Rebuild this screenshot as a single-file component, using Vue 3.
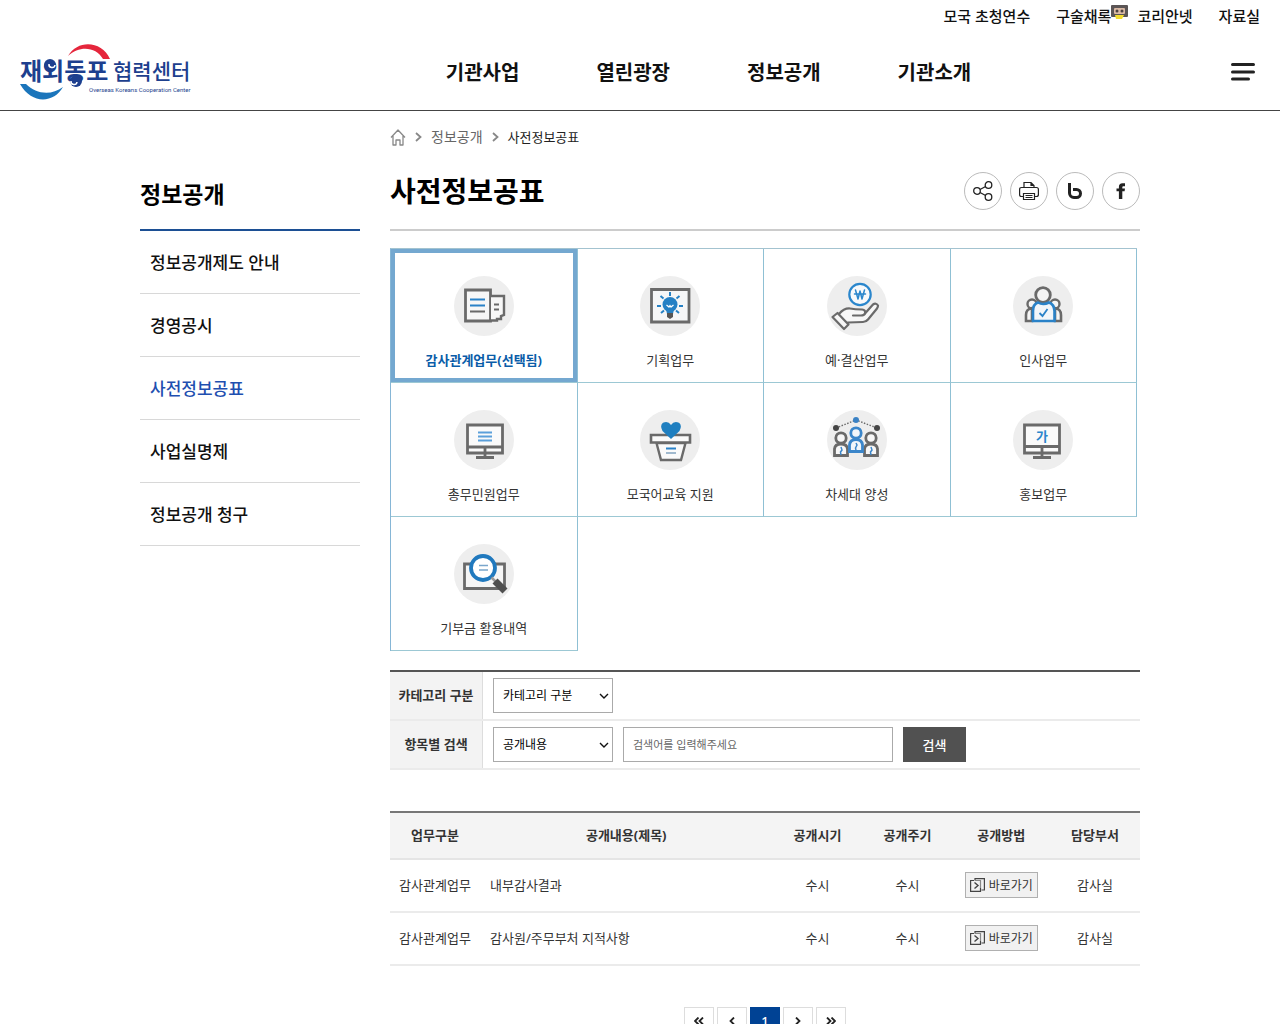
<script setup>
import { ref } from 'vue';

const topLinks = [
  { name: '모국 초청연수' },
  { name: '구술채록', cassette: true },
  { name: '코리안넷' },
  { name: '자료실' },
];

const mainMenu = ['기관사업', '열린광장', '정보공개', '기관소개'];

const sideMenu = ['정보공개제도 안내', '경영공시', '사전정보공표', '사업실명제', '정보공개 청구'];
const currentPage = '사전정보공표';

const categories = [
  { name: '감사관계업무', icon: 'docs' },
  { name: '기획업무', icon: 'idea' },
  { name: '예·결산업무', icon: 'budget' },
  { name: '인사업무', icon: 'people' },
  { name: '총무민원업무', icon: 'monitor' },
  { name: '모국어교육 지원', icon: 'donate' },
  { name: '차세대 양성', icon: 'network' },
  { name: '홍보업무', icon: 'promo' },
  { name: '기부금 활용내역', icon: 'search' },
];
const selected = ref('감사관계업무');

const category = ref('');
const field = ref('content');
const keyword = ref('');

const rows = [
  { work: '감사관계업무', title: '내부감사결과', time: '수시', cycle: '수시', dept: '감사실' },
  { work: '감사관계업무', title: '감사원/주무부처 지적사항', time: '수시', cycle: '수시', dept: '감사실' },
];
</script>

<template>
  <header class="header">
    <ul class="top-links">
      <li v-for="link in topLinks" :key="link.name">
        <a href="#">{{ link.name }}</a>
        <svg v-if="link.cassette" class="cassette" width="17" height="14" viewBox="0 0 17 14" aria-hidden="true">
          <rect x="0" y="0" width="17" height="12" rx="1" fill="#5b5555" />
          <rect x="3" y="3" width="11" height="6" rx="1" fill="#d9b9a4" />
          <circle cx="6" cy="6" r="1.5" fill="#4a4040" />
          <circle cx="11" cy="6" r="1.5" fill="#4a4040" />
          <path d="M5 14L4 10H13L11 14Z" fill="#f3dc2e" />
        </svg>
      </li>
    </ul>
    <div class="header-main">
      <a class="logo" href="#" aria-label="재외동포협력센터">
        <svg width="170" height="58" viewBox="0 0 170 58">
          <path d="M48 13C58 -4 82 -2 90 16L83 16C76 4 60 2 48 13Z" fill="#e5263c" />
          <path d="M0 41C12 62 34 60 43 44C31 53 16 51 6 41Z" fill="#1b75bb" />
          <text class="logo-strong" x="0" y="37">재외동포</text>
          <text class="logo-name" x="93" y="36">협력센터</text>
          <circle cx="30" cy="22" r="6" fill="#1d3f8e" />
          <circle cx="56" cy="38" r="6" fill="#1d3f8e" />
          <path d="M29 21A3 3 0 0 0 35 22M57 39A3 3 0 0 1 51 38" fill="none" stroke="#fff" stroke-width="1.5" />
          <text class="logo-en" x="69" y="49">Overseas Koreans Cooperation Center</text>
        </svg>
      </a>
      <nav class="main-nav">
        <a v-for="item in mainMenu" :key="item" href="#">{{ item }}</a>
      </nav>
      <button class="menu-btn" type="button" aria-label="전체메뉴">
        <svg width="24" height="18" viewBox="0 0 24 18">
          <path d="M1.5 1.5H22.5M1.5 9H22.5M1.5 16H17.5" stroke="#222" stroke-width="3" stroke-linecap="round" />
        </svg>
      </button>
    </div>
  </header>

  <div class="container">
    <aside class="side">
      <h2>정보공개</h2>
      <ul>
        <li v-for="item in sideMenu" :key="item">
          <a href="#" :class="{ on: item === currentPage }">{{ item }}</a>
        </li>
      </ul>
    </aside>

    <main class="content">
      <div class="breadcrumb">
        <a href="#" class="home" aria-label="홈">
          <svg width="16" height="17" viewBox="0 0 16 17">
            <path d="M1 8.5L8 1L15 8.5M3 7V16H6V11H10V16H13V7" fill="none" stroke="#888" stroke-width="1.3" stroke-linejoin="round" />
          </svg>
        </a>
        <svg width="7" height="10" viewBox="0 0 7 10"><path d="M1 1L5.5 5L1 9" fill="none" stroke="#888" stroke-width="1.8" /></svg>
        <a href="#">정보공개</a>
        <svg width="7" height="10" viewBox="0 0 7 10"><path d="M1 1L5.5 5L1 9" fill="none" stroke="#888" stroke-width="1.8" /></svg>
        <span>사전정보공표</span>
      </div>

      <div class="title-row">
        <h1>사전정보공표</h1>
        <div class="share">
          <button type="button" aria-label="공유">
            <svg width="20" height="20" viewBox="0 0 20 20" fill="none" stroke="#222" stroke-width="1.3">
              <circle cx="4" cy="10" r="3.3" />
              <circle cx="15.5" cy="4" r="3.3" />
              <circle cx="15.5" cy="16" r="3.3" />
              <path d="M7 8.5L12.6 5.5M7 11.5L12.6 14.5" />
            </svg>
          </button>
          <button type="button" aria-label="인쇄">
            <svg width="20" height="20" viewBox="0 0 20 20" fill="none" stroke="#222" stroke-width="1.2">
              <path d="M5 6.5V1.5H12L15 4.5V6.5M12 1.5V4.5H15" />
              <path d="M4 15.5H2.5Q0.6 15.5 0.6 13.5V8.5Q0.6 6.5 2.5 6.5H17.5Q19.4 6.5 19.4 8.5V13.5Q19.4 15.5 17.5 15.5H16" />
              <path d="M4.5 12.5H15.5V18.5H4.5ZM6.5 14.5H13.5M6.5 16.5H13.5" />
            </svg>
          </button>
          <button type="button" aria-label="밴드">
            <svg width="16" height="18" viewBox="0 0 16 18" fill="none" stroke="#222" stroke-width="3">
              <path d="M2.5 1V11A4.5 4.5 0 0 0 7 15.5H9.5A4 4 0 0 0 9.5 7.5H6" />
            </svg>
          </button>
          <button type="button" aria-label="페이스북">
            <svg width="10" height="16" viewBox="0 0 10 16">
              <path d="M9 0.3V3.2H7.3Q6.3 3.2 6.3 4.2V5.5H9L8.6 8.3H6.3V16H2.9V8.3H0.5V5.5H2.9V4Q2.9 0.3 6.5 0.3Z" fill="#222" />
            </svg>
          </button>
        </div>
      </div>

      <ul class="category-grid">
        <li v-for="item in categories" :key="item.name">
          <a href="#" :class="{ on: item.name === selected }" @click.prevent="selected = item.name">
            <svg width="60" height="60" viewBox="0 0 60 60" fill="none" stroke="#6a6a6a" stroke-width="2.8" aria-hidden="true">
              <circle cx="30" cy="30" r="30" fill="#eee" stroke="none" />
              <g v-if="item.icon === 'docs'">
                <path d="M11.5 14H36.5V45H11.5Z" fill="#f7f7f7" />
                <path d="M37 20H50V39L47 40V43H43V44.5H37" fill="#f7f7f7" stroke-width="2.4" />
                <path d="M16 23.5H31M16 29.5H31" stroke="#2a82c8" stroke-width="2" />
                <path d="M16 35.5H31M40 28.5H45M40 33.5H45" stroke-width="2" />
              </g>
              <g v-else-if="item.icon === 'idea'">
                <path d="M11.5 13.5H49V46H11.5Z" fill="#f5f6f7" />
                <circle cx="30" cy="28.5" r="7.5" fill="#2580c4" stroke="none" />
                <path d="M26 33H34L33 38H27Z" fill="#2580c4" stroke="none" />
                <path d="M27 37H33V41L30 43L27 41Z" fill="#555" stroke="none" />
                <path d="M26.5 29L29 31L30 29.5L31 31L33.5 29" stroke="#fff" stroke-width="1.2" />
                <path d="M30 16V20M20.5 20L23.5 22.5M39.5 20L36.5 22.5M17 30H21M39 30H43M21 37L24 34.5M39 37L36 34.5" stroke="#2580c4" stroke-width="2" />
              </g>
              <g v-else-if="item.icon === 'budget'" stroke-width="2.2" stroke-linejoin="round" stroke-linecap="round">
                <circle cx="33" cy="18.5" r="10.7" fill="#f7f9fb" stroke="#2a86cc" />
                <path d="M28.5 14L31 23L33 15L35 23L37.5 14M27.5 18H38.5" stroke="#2a86cc" stroke-width="1.5" />
                <path d="M12 38Q17 32 23 32.5Q28 33.5 35 33.5Q39 34 38 37.5L46 28.5Q49 26.5 51 29.5Q51 31 50 32.5L41 43.5Q39 46 36 46L21 46.5" fill="#f7f7f7" />
                <path d="M38 37.5Q37 39.5 34 39.5H26" />
                <path d="M5.5 41L10.5 37L21.5 48.5L17 53Z" fill="#f7f7f7" />
              </g>
              <g v-else-if="item.icon === 'people'">
                <circle cx="19" cy="28" r="4.5" fill="#f5f5f5" stroke-width="2.4" />
                <circle cx="42" cy="28" r="4.5" fill="#f5f5f5" stroke-width="2.4" />
                <path d="M13 45V39Q13 33 19 32V45ZM48 45V39Q48 33 42 32V45Z" fill="#f5f5f5" stroke-width="2.6" />
                <circle cx="30" cy="19" r="7.3" fill="#f5f5f5" />
                <path d="M20 45V35Q20 28 25 26.5Q30 29.5 36 26.5Q41 28 41.5 35V45Z" fill="#f2f6fa" stroke="#2a82c8" stroke-width="2.6" />
                <path d="M26.5 37L29.5 40L34.5 33" stroke="#2a82c8" stroke-width="1.8" />
              </g>
              <g v-else-if="item.icon === 'monitor'">
                <path d="M13.5 15H48.5V43H13.5Z" fill="#fafafa" />
                <path d="M13 37H49M31 37V47M22 47.5H40" />
                <path d="M24 22.5H38M24 26.5H38M24 30.5H38" stroke="#5a9fda" stroke-width="1.8" />
              </g>
              <g v-else-if="item.icon === 'donate'">
                <path d="M16.5 33H45.5L41 50H21Z" fill="#fafafa" stroke-width="2.4" />
                <path d="M11 25H50V32.5H11Z" fill="#fafafa" stroke-width="2.6" />
                <path d="M31 29L22.5 21Q19.5 15.5 23 12.8Q28 10.5 31 15Q34 10.5 39 12.8Q42.5 15.5 39.5 21Z" fill="#1f7fc0" stroke="none" />
                <path d="M26 38.5H36" stroke="#2a82c8" stroke-width="2" />
                <path d="M26 43H36" stroke="#8aa9c4" stroke-width="1.6" />
              </g>
              <g v-else-if="item.icon === 'network'">
                <path d="M9 18L29 10L50 18" stroke-width="1.4" stroke-dasharray="1.5 1.5" />
                <circle cx="9" cy="18" r="3" fill="#444" stroke="none" />
                <circle cx="50" cy="18" r="3" fill="#444" stroke="none" />
                <circle cx="29" cy="10" r="3" fill="#3b82c4" stroke="none" />
                <circle cx="14" cy="28" r="5.2" fill="#f7f7f7" />
                <circle cx="44" cy="28" r="5.2" fill="#f7f7f7" />
                <path d="M7.5 45.5V39Q8 34 14 34Q20 34 20.5 39V45.5ZM37.5 45.5V39Q38 34 44 34Q50 34 50.5 39V45.5Z" fill="#f7f7f7" />
                <path d="M22.5 41.5V35Q23 29.5 29 29.5Q35 29.5 35.5 35V41.5Z" fill="#f2f6fa" stroke="#3b86ca" />
                <circle cx="29" cy="23" r="5.2" fill="#f2f6fa" stroke="#3b86ca" />
                <path d="M14 37L15 40L13.5 42L14 45M29 33L30 35L28.5 38L29 40M44 37L45 40L43.5 42L44 45" stroke="#3b86ca" stroke-width="1.5" />
              </g>
              <g v-else-if="item.icon === 'promo'">
                <path d="M11.5 15H46.5V43H11.5Z" fill="#fafafa" />
                <path d="M11 36.5H47M29 36.5V47M20 47.5H38" />
                <text class="promo-text" x="29" y="31" text-anchor="middle">가</text>
              </g>
              <g v-else>
                <path d="M10.5 20H50.5V44.5H10.5Z" fill="#f5f5f5" />
                <circle cx="29" cy="24" r="12" fill="#fff" stroke="#2079be" stroke-width="3.8" />
                <path d="M25 21.5H34M25 26H34" stroke="#7aa6cc" stroke-width="1.5" />
                <path d="M37.5 33.5L42 38" stroke="#999" stroke-width="2.5" />
                <path d="M41 37L51 47" stroke="#505050" stroke-width="7" />
              </g>
            </svg>
            <span>{{ item.name }}{{ item.name === selected ? '(선택됨)' : '' }}</span>
          </a>
        </li>
      </ul>

      <form class="search-form" @submit.prevent>
        <div class="form-row">
          <label class="form-label" for="category">카테고리 구분</label>
          <div class="form-field">
            <div class="select">
              <select id="category" v-model="category">
                <option value="">카테고리 구분</option>
                <option v-for="item in categories" :key="item.name" :value="item.name">{{ item.name }}</option>
              </select>
              <svg width="10" height="6" viewBox="0 0 10 6"><path d="M1 1L5 5L9 1" fill="none" stroke="#111" stroke-width="1.4" /></svg>
            </div>
          </div>
        </div>
        <div class="form-row">
          <label class="form-label" for="field">항목별 검색</label>
          <div class="form-field">
            <div class="select">
              <select id="field" v-model="field">
                <option value="content">공개내용</option>
                <option value="dept">담당부서</option>
              </select>
              <svg width="10" height="6" viewBox="0 0 10 6"><path d="M1 1L5 5L9 1" fill="none" stroke="#111" stroke-width="1.4" /></svg>
            </div>
            <input v-model="keyword" type="text" aria-label="검색어" placeholder="검색어를 입력해주세요">
            <button type="submit">검색</button>
          </div>
        </div>
      </form>

      <table class="list">
        <colgroup>
          <col class="col-sm">
          <col>
          <col class="col-sm">
          <col class="col-sm">
          <col class="col-md">
          <col class="col-sm">
        </colgroup>
        <thead>
          <tr>
            <th>업무구분</th>
            <th>공개내용(제목)</th>
            <th>공개시기</th>
            <th>공개주기</th>
            <th>공개방법</th>
            <th>담당부서</th>
          </tr>
        </thead>
        <tbody>
          <tr v-for="row in rows" :key="row.title">
            <td>{{ row.work }}</td>
            <td class="left">{{ row.title }}</td>
            <td>{{ row.time }}</td>
            <td>{{ row.cycle }}</td>
            <td>
              <a class="go-btn" href="#">
                <svg width="15" height="14" viewBox="0 0 15 14" fill="none" stroke="#444" stroke-width="1.2">
                  <path d="M4 2.5H0.6V13.4H10.5V10M5 2.5V0.6H14.4V12H11.5" />
                  <path d="M5 2.5H10.5V10" stroke="#888" />
                  <path d="M4.5 4.5L8 7.5L4.5 10.5" stroke-width="1.4" />
                </svg>
                바로가기
              </a>
            </td>
            <td>{{ row.dept }}</td>
          </tr>
        </tbody>
      </table>

      <nav class="paging" aria-label="페이지">
        <a href="#" aria-label="처음">
          <svg width="10" height="8" viewBox="0 0 10 8"><path d="M4.5 0.5L1 4L4.5 7.5M9 0.5L5.5 4L9 7.5" /></svg>
        </a>
        <a href="#" aria-label="이전">
          <svg width="6" height="8" viewBox="0 0 6 8"><path d="M5 0.5L1.5 4L5 7.5" /></svg>
        </a>
        <a href="#" class="on">1</a>
        <a href="#" aria-label="다음">
          <svg width="6" height="8" viewBox="0 0 6 8"><path d="M1 0.5L4.5 4L1 7.5" /></svg>
        </a>
        <a href="#" aria-label="마지막">
          <svg width="10" height="8" viewBox="0 0 10 8"><path d="M1 0.5L4.5 4L1 7.5M5.5 0.5L9 4L5.5 7.5" /></svg>
        </a>
      </nav>
    </main>
  </div>
</template>

<style>
body {
  margin: 0;
  background: #fff;
  color: #333;
  font-family: "Noto Sans", "Noto Sans CJK KR", sans-serif;
  font-size: 13px;
}
</style>

<style scoped>
* {
  box-sizing: border-box;
}

ul {
  margin: 0;
  padding: 0;
  list-style: none;
}

a {
  color: inherit;
  text-decoration: none;
}

button,
input,
select {
  font-family: inherit;
}

svg {
  display: block;
  flex-shrink: 0;
}

/* header */
.header {
  border-bottom: 1px solid #444;
}

.top-links {
  display: flex;
  justify-content: flex-end;
  gap: 26px;
  padding-right: 20px;
  height: 33px;
  line-height: 32px;
  font-size: 15px;
  font-weight: 500;
  color: #111;
}

.top-links li {
  position: relative;
}

.cassette {
  position: absolute;
  top: 5px;
  left: 100%;
}

.header-main {
  display: flex;
  align-items: center;
  height: 77px;
  padding: 0 25px 0 20px;
}

.logo svg {
  overflow: visible;
}

.logo-strong {
  font-size: 24px;
  font-weight: 700;
  fill: #1d3f8e;
}

.logo-name {
  font-size: 21px;
  font-weight: 500;
  fill: #1d3f8e;
}

.logo-en {
  font-family: Roboto, sans-serif;
  font-size: 6px;
  fill: #1d3f8e;
}

.main-nav {
  display: flex;
  flex: 1;
  justify-content: center;
  gap: 77px;
  font-size: 20px;
  font-weight: 700;
  color: #111;
}

.menu-btn {
  display: flex;
  justify-content: flex-end;
  width: 28px;
  padding: 6px 0;
  border: 0;
  background: none;
  cursor: pointer;
}

/* layout */
.container {
  display: flex;
  gap: 30px;
  max-width: 1000px;
  margin: 0 auto;
  padding-bottom: 60px;
}

.side {
  width: 220px;
  flex-shrink: 0;
  padding-top: 46px;
}

.side h2 {
  margin: 0;
  height: 74px;
  line-height: 74px;
  border-bottom: 2px solid #1c4f94;
  font-size: 23px;
  font-weight: 700;
  color: #000;
}

.side li {
  border-bottom: 1px solid #d8d8d8;
}

.side li a {
  display: block;
  padding: 2px 10px 0;
  line-height: 60px;
  font-size: 17px;
  font-weight: 500;
  color: #111;
}

.side li a.on {
  color: #1f4fb0;
}

.content {
  flex: 1;
  min-width: 0;
}

.breadcrumb {
  display: flex;
  align-items: center;
  gap: 9px;
  padding-top: 13px;
  line-height: 26px;
  font-size: 13px;
  color: #222;
}

.breadcrumb a {
  font-size: 14px;
  color: #666;
}

.title-row {
  display: flex;
  align-items: center;
  justify-content: space-between;
  height: 81px;
  padding-top: 2px;
  border-bottom: 2px solid #ccc;
}

.title-row h1 {
  margin: 0;
  font-size: 28px;
  font-weight: 700;
  line-height: 40px;
  color: #000;
}

.share {
  display: flex;
  gap: 8px;
}

.share button {
  display: flex;
  align-items: center;
  justify-content: center;
  width: 38px;
  height: 38px;
  padding: 0;
  border: 1px solid #bbb;
  border-radius: 50%;
  background: #fff;
  cursor: pointer;
}

/* category */
.category-grid {
  display: grid;
  grid-template-columns: repeat(4, 1fr);
  margin: 17px 3px 19px 0;
  border-top: 1px solid #a3c3d0;
  border-left: 1px solid #86b6d6;
}

.category-grid li {
  border-right: 1px solid #8fc0d4;
  border-bottom: 1px solid #9cc8d4;
}

.category-grid a {
  display: flex;
  flex-direction: column;
  align-items: center;
  gap: 12px;
  height: 133px;
  padding-top: 27px;
  line-height: 24px;
}

.category-grid a.on {
  box-shadow: inset 0 0 0 4px #74a8d0;
  font-weight: 700;
  color: #0a5ca8;
}

.promo-text {
  font-size: 13px;
  font-weight: 700;
  fill: #2a86cc;
  stroke: none;
}

/* search */
.search-form {
  border-top: 2px solid #555;
}

.form-row {
  display: flex;
  height: 49px;
  border-bottom: 2px solid #ebebeb;
}

.form-label {
  width: 93px;
  border-right: 1px solid #ddd;
  background: #f3f3f3;
  line-height: 46px;
  text-align: center;
  font-weight: 700;
}

.form-field {
  display: flex;
  flex: 1;
  align-items: center;
  gap: 10px;
  padding-left: 10px;
}

.select {
  position: relative;
}

.select svg {
  position: absolute;
  top: 15px;
  right: 4px;
  pointer-events: none;
}

.form-field select,
.form-field input {
  display: block;
  height: 35px;
  padding: 0 9px;
  border: 1px solid #aaa;
  border-radius: 0;
  background: #fff;
  font-size: 12px;
  color: #000;
}

.form-field select {
  width: 120px;
  appearance: none;
}

.form-field input {
  width: 270px;
}

.form-field input::placeholder {
  font-size: 11px;
  color: #666;
}

.form-field button {
  width: 63px;
  height: 35px;
  padding: 0;
  border: 0;
  background: #515151;
  font-size: 13px;
  font-weight: 500;
  color: #fff;
  cursor: pointer;
}

/* list */
.list {
  width: 100%;
  margin-top: 41px;
  border-top: 2px solid #777;
  border-spacing: 0;
  table-layout: fixed;
  text-align: center;
}

.col-sm {
  width: 12%;
}

.col-md {
  width: 13%;
}

.list th {
  height: 47px;
  padding: 0 0 2px;
  border-bottom: 2px solid #e5e5e5;
  background: #f4f4f4;
}

.list td {
  height: 53px;
  padding: 0 0 2px;
  border-bottom: 2px solid #ebebeb;
}

.list td.left {
  padding-left: 10px;
  text-align: left;
}

.go-btn {
  display: inline-flex;
  align-items: center;
  gap: 4px;
  height: 26px;
  padding: 0 4px;
  border: 1px solid #b0b0b0;
  background: #f1f1f1;
  font-size: 12px;
  vertical-align: middle;
}

/* paging */
.paging {
  display: flex;
  justify-content: center;
  gap: 3px;
  margin-top: 41px;
}

.paging a {
  display: flex;
  align-items: center;
  justify-content: center;
  width: 30px;
  height: 28px;
  border: 1px solid #ddd;
}

.paging a.on {
  border-color: #004294;
  background: #004294;
  font-weight: 500;
  color: #fff;
}

.paging path {
  fill: none;
  stroke: #222;
  stroke-width: 1.8;
}
</style>
